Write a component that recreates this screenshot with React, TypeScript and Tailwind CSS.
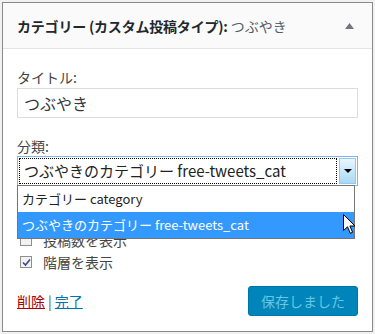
import React from "react";

const font = { fontFamily: '"Noto Sans CJK JP", "Noto Sans", sans-serif' };

function Check({ checked }: { checked?: boolean }) {
  return (
    <span className="w-[12px] h-[12px] border border-[#8e8f8f] bg-[#f2f2f2] flex items-center justify-center">
      {checked && (
        <svg width="9" height="9" viewBox="0 0 9 9">
          <path d="M1 4.5 L3.5 7 L8 1.5" stroke="#3b4a8c" strokeWidth="1.6" fill="none" />
        </svg>
      )}
    </span>
  );
}

export default function App() {
  return (
    <div className="w-[375px] h-[334px] bg-[#f1f1f1] p-[2px]" style={font}>
      <div className="relative w-[371px] h-[330px] border border-[#8a8a8a] bg-white flex flex-col">
        <div className="h-[46px] bg-[#fafafa] border-b border-[#e5e5e5] flex items-center justify-between pl-[14px] pr-[18px]">
          <div className="text-[14px] leading-[20px] text-[#23282d]">
            <span className="font-semibold tracking-[-0.2px]">カテゴリー (カスタム投稿タイプ): </span>
            <span className="text-[#555d66]">つぶやき</span>
          </div>
          <svg width="9" height="6" viewBox="0 0 9 6">
            <path d="M4.5 0 L9 6 L0 6 Z" fill="#72777c" />
          </svg>
        </div>
        <div className="flex flex-col px-[14px] pt-[18px] text-[#444]">
          <div className="text-[14px] leading-[20px]">タイトル:</div>
          <div className="mt-[1px] h-[30px] border border-[#dddddd] flex items-center px-[6px] text-[16px] text-[#32373c]">
            つぶやき
          </div>
          <div className="mt-[18px] text-[14px] leading-[20px]">分類:</div>
          <div className="relative">
            <div className="h-[30px] border border-[#7eb4ea] flex items-stretch p-[1px]">
              <div className="flex-1 border border-dotted border-black flex items-center px-[4px] text-[15px] text-[#222]">
                つぶやきのカテゴリー free-tweets_cat
              </div>
              <div className="w-[17px] ml-[2px] border border-[#98c8ef] bg-gradient-to-b from-[#eaf6fd] to-[#a7d9f5] flex items-center justify-center">
                <svg width="8" height="4" viewBox="0 0 8 4">
                  <path d="M0 0 L8 0 L4 4 Z" fill="#000" />
                </svg>
              </div>
            </div>
            <div className="absolute left-0 top-[29px] w-[338px] border border-[#767676] bg-white z-10 text-[13px]">
              <div className="h-[26px] flex items-center px-[4px] text-[#222]">カテゴリー category</div>
              <div className="h-[26px] flex items-center px-[4px] bg-[#3399ff] text-white">
                つぶやきのカテゴリー free-tweets_cat
              </div>
            </div>
          </div>
          <div className="mt-[43px] flex flex-col text-[14px] text-[#444]">
            <div className="h-[22px] flex items-center gap-[11px] pl-[3px]">
              <Check />
              <span>投稿数を表示</span>
            </div>
            <div className="h-[22px] flex items-center gap-[11px] pl-[3px]">
              <Check checked />
              <span>階層を表示</span>
            </div>
          </div>
          <div className="mt-[13px] flex items-center justify-between">
            <div className="text-[14px] leading-[20px] flex items-center gap-[3px]">
              <span className="text-[#a00] underline">削除</span>
              <span className="text-[#555]">|</span>
              <span className="text-[#0073aa] underline">完了</span>
            </div>
            <div className="w-[110px] h-[30px] rounded-[3px] bg-[#0085ba] border border-[#0073aa] flex items-center justify-center text-[14px] text-[#66c6e4]">
              保存しました
            </div>
          </div>
        </div>
        <svg className="absolute left-[340px] top-[211px] z-20" width="14" height="22" viewBox="0 0 14 22">
          <path d="M0.5 0.5 L0.5 16.5 L4.5 12.8 L7.3 19.3 L9.6 18.3 L6.9 12 L12 12 Z" fill="#fff" stroke="#000" strokeWidth="1" strokeLinejoin="miter" />
        </svg>
      </div>
    </div>
  );
}
